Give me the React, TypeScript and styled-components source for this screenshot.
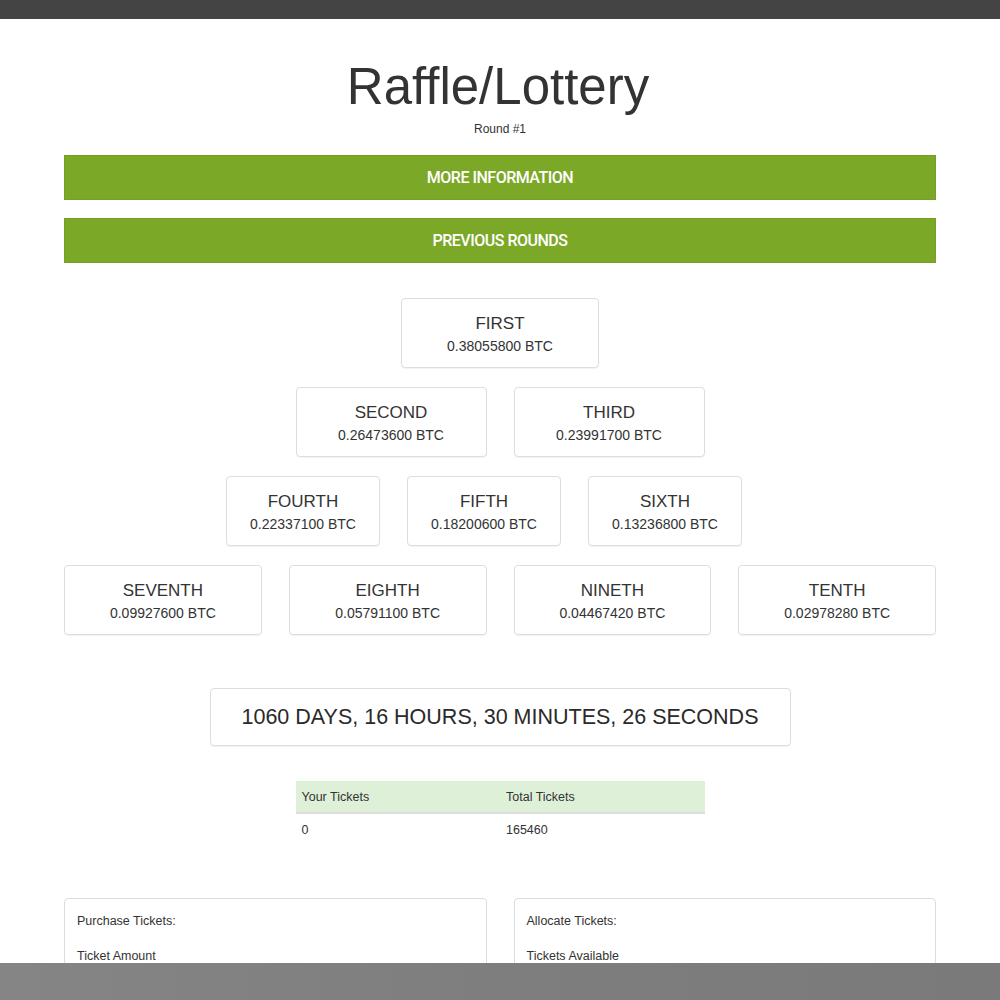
import React from "react";
import styled, { createGlobalStyle } from "styled-components";

const GlobalStyle = createGlobalStyle`
  html, body {
    margin: 0;
    padding: 0;
    background: #fff;
    font-family: "Liberation Sans", Arial, sans-serif;
    color: #333;
  }
`;

const prizeRows = [
  { shift: 0, width: 198, items: [["FIRST", "0.38055800"]] },
  {
    shift: 0,
    width: 191,
    items: [
      ["SECOND", "0.26473600"],
      ["THIRD", "0.23991700"],
    ],
  },
  {
    shift: 32,
    width: 154,
    items: [
      ["FOURTH", "0.22337100"],
      ["FIFTH", "0.18200600"],
      ["SIXTH", "0.13236800"],
    ],
  },
  {
    shift: 0,
    width: 198,
    items: [
      ["SEVENTH", "0.09927600"],
      ["EIGHTH", "0.05791100"],
      ["NINETH", "0.04467420"],
      ["TENTH", "0.02978280"],
    ],
  },
];

export default function App() {
  return (
    <>
      <GlobalStyle />
      <TopBar />
      <Container>
        <Title>Raffle/Lottery</Title>
        <Subtitle>Round #1</Subtitle>
        <GreenButton>MORE INFORMATION</GreenButton>
        <GreenButton>PREVIOUS ROUNDS</GreenButton>

        <Prizes>
          {prizeRows.map((row, i) => (
            <PrizeRow key={i} $shift={row.shift}>
              {row.items.map(([place, amount]) => (
                <PrizeCard key={place} $width={row.width}>
                  <Place>{place}</Place>
                  <Amount>{amount} BTC</Amount>
                </PrizeCard>
              ))}
            </PrizeRow>
          ))}
        </Prizes>

        <Countdown>1060 DAYS, 16 HOURS, 30 MINUTES, 26 SECONDS</Countdown>

        <TicketTable>
          <thead>
            <tr>
              <Th>Your Tickets</Th>
              <Th>Total Tickets</Th>
            </tr>
          </thead>
          <tbody>
            <tr>
              <Td>0</Td>
              <Td>165460</Td>
            </tr>
          </tbody>
        </TicketTable>

        <Panels>
          <Panel>
            <PanelTitle>Purchase Tickets:</PanelTitle>
            <FieldLabel>Ticket Amount</FieldLabel>
          </Panel>
          <Panel>
            <PanelTitle>Allocate Tickets:</PanelTitle>
            <FieldLabel>Tickets Available</FieldLabel>
          </Panel>
        </Panels>
      </Container>
      <BottomBar />
    </>
  );
}

const TopBar = styled.div`
  height: 19px;
  background: #444444;
`;

const BottomBar = styled.div`
  position: fixed;
  left: 0;
  right: 0;
  bottom: 0;
  height: 37px;
  background: linear-gradient(90deg, #858585, #7e7e7e 50%, #7a7a7a);
`;

const Container = styled.div`
  width: 872px;
  margin: 0 auto;
  display: flex;
  flex-direction: column;
  align-items: center;
`;

const Title = styled.h1`
  margin: 38px 0 0;
  padding-right: 4px;
  font-size: 51px;
  font-weight: 400;
  line-height: 60px;
  color: #333;
`;

const Subtitle = styled.div`
  margin-top: 4px;
  font-size: 12px;
  line-height: 16px;
  color: #333;
`;

const GreenButton = styled.button`
  width: 100%;
  height: 45px;
  margin-top: 18px;
  & + & {
    margin-top: 18px;
  }
  border: 1px solid #76a024;
  background: #7ca828;
  color: #fff;
  font-family: Roboto, "Liberation Sans", sans-serif;
  font-size: 16px;
  font-weight: 500;
  letter-spacing: -0.5px;
  cursor: pointer;
`;

const Prizes = styled.div`
  width: 100%;
  margin-top: 35px;
  display: flex;
  flex-direction: column;
  gap: 19px;
`;

const PrizeRow = styled.div<{ $shift: number }>`
  display: flex;
  justify-content: center;
  gap: 27px;
  padding-right: ${({ $shift }) => $shift}px;
`;

const PrizeCard = styled.div<{ $width: number }>`
  width: ${({ $width }) => $width}px;
  height: 70px;
  box-sizing: border-box;
  padding-top: 14px;
  border: 1px solid #ddd;
  border-radius: 4px;
  box-shadow: 0 1px 1px rgba(0, 0, 0, 0.05);
  display: flex;
  flex-direction: column;
  align-items: center;
`;

const Place = styled.div`
  font-size: 17px;
  line-height: 22px;
  color: #333;
`;

const Amount = styled.div`
  margin-top: 1px;
  font-size: 14px;
  line-height: 20px;
  color: #333;
`;

const Countdown = styled.div`
  margin-top: 53px;
  width: 581px;
  height: 58px;
  box-sizing: border-box;
  border: 1px solid #ddd;
  border-radius: 4px;
  box-shadow: 0 1px 1px rgba(0, 0, 0, 0.05);
  display: flex;
  align-items: center;
  justify-content: center;
  font-size: 21.5px;
  color: #2a2a2a;
`;

const TicketTable = styled.table`
  margin-top: 35px;
  width: 409px;
  border-collapse: collapse;
  font-size: 12.5px;
  color: #333;
`;

const Th = styled.th`
  width: 50%;
  text-align: left;
  font-weight: 400;
  background: #dff0d8;
  padding: 9px 6px 8px;
  border-bottom: 2px solid #ddd;
`;

const Td = styled.td`
  padding: 9px 6px;
`;

const Panels = styled.div`
  width: 100%;
  margin-top: 52px;
  display: grid;
  grid-template-columns: 1fr 1fr;
  column-gap: 27px;
`;

const Panel = styled.div`
  border: 1px solid #ddd;
  border-radius: 4px;
  box-shadow: 0 1px 1px rgba(0, 0, 0, 0.05);
  padding: 14px 12px 40px;
  font-size: 12.5px;
  color: #333;
`;

const PanelTitle = styled.div`
  line-height: 16px;
`;

const FieldLabel = styled.div`
  margin-top: 19px;
  line-height: 16px;
`;
